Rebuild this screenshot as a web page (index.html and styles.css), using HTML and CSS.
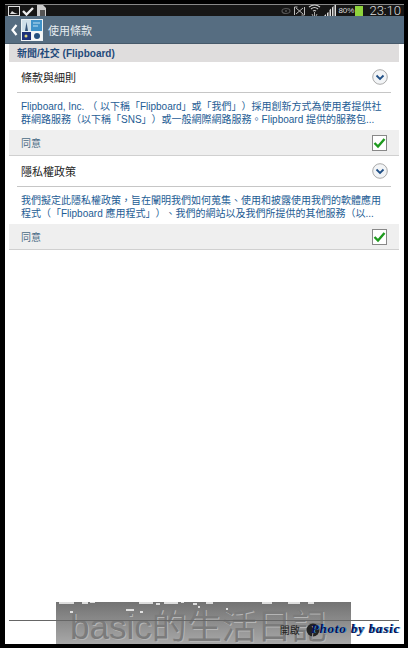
FILE: index.html
```html
<!DOCTYPE html>
<html lang="zh-Hant">
<head>
    <meta charset="UTF-8" />
    <meta name="viewport" content="width=device-width, initial-scale=1.0"/>
    <title>使用條款</title>
    <link rel="stylesheet" href="styles.css">
</head>
<body>

<div class="screen">
    <div class="status">
        <div class="status-left">
            <svg width="12" height="10" viewBox="0 0 12 10"><rect x=".5" y=".5" width="11" height="9" fill="none" stroke="#ddd"/><path d="M2 8l2-3 2 1.500 1 .5 3 1z" fill="#ddd"/></svg>
            <svg width="12" height="10" viewBox="0 0 12 10"><path d="M1 5l3.500 3.500L11 2" fill="none" stroke="#eee" stroke-width="2.400"/></svg>
            <svg class="doc" width="9" height="12" viewBox="0 0 9 12"><path d="M0 0h6l3 3v9H0z" fill="#ccc"/><rect x="3" y="5" width="5" height="6" fill="#555"/></svg>
        </div>
        <div class="status-right">
            <svg width="10" height="8" viewBox="0 0 10 8"><ellipse cx="5" cy="4" rx="4" ry="2.500" fill="none" stroke="#555" stroke-width="1.200"/><circle cx="5" cy="4" r="1" fill="#555"/></svg>
            <svg width="11" height="10" viewBox="0 0 11 10"><path d="M.5 1v8M10.500 1v8M.5 1h3M7.500 9h3M2 2l7 6M9 2L2 8" stroke="#bbb" fill="none"/></svg>
            <svg width="13" height="13" viewBox="0 0 13 13"><path d="M1 3q5.500-4 11 0M3 5q3.500-3 7 0M5 7q1.500-1 3 0" stroke="#ccc" fill="none" stroke-width="1.200"/><path d="M6.500 8v4M4 10l1 2M9 10l-1 2" stroke="#aaa"/></svg>
            <svg class="signal" width="12" height="11" viewBox="0 0 12 11"><path d="M0 11l2-2v2zM3 11V8l1.500-1v4zM5.500 11V5L7 3.500V11zM8 11V2.500L9.500 1V11zM10.500 11V0H12v11z" fill="#ddd"/></svg>
            <span class="battery-text">80%</span>
            <span class="battery"></span>
            <span class="clock">23:10</span>
        </div>
    </div>

    <div class="appbar">
        <svg class="back" width="7" height="12" viewBox="0 0 7 12"><path d="M5.500 1L1.500 6l4 5" fill="none" stroke="#fff" stroke-width="2.200"/></svg>
        <svg class="app-icon" width="22" height="22" viewBox="0 0 22 22">
            <rect width="22" height="22" fill="#eef3f6"/>
            <rect x="1" y="1" width="9" height="11" fill="#cfe0ea"/>
            <path d="M4 12l1.500-9L7 12z" fill="#35557a"/>
            <rect x="10" y="1" width="11" height="11" fill="#3f92c9"/>
            <path d="M12 4h7M12 7h5" stroke="#bfe0f2"/>
            <rect x="1" y="13" width="9" height="8" fill="#1c2f78"/>
            <circle cx="5" cy="17" r="1.500" fill="#d9d27a"/>
            <rect x="11" y="13" width="10" height="8" fill="#f6f6f6"/>
            <circle cx="16" cy="17" r="3" fill="#26507f"/>
        </svg>
        <span class="appbar-title">使用條款</span>
    </div>

    <div class="section-bar">新聞/社交 (Flipboard)</div>

    <div class="term-head">
        <span>條款與細則</span>
        <svg class="chevron" width="16" height="16" viewBox="0 0 16 16"><circle cx="8" cy="8" r="7.300" fill="#f2f4f6" stroke="#aaa"/><path d="M4.500 6.500L8 10l3.500-3.500" fill="none" stroke="#1f4f86" stroke-width="1.800"/></svg>
    </div>
    <p class="term-text">Flipboard, Inc. （ 以下稱「Flipboard」或「我們」）採用創新方式為使用者提供社<br>群網路服務（以下稱「SNS」）或一般網際網路服務。Flipboard 提供的服務包...</p>
    <div class="agree">
        <span>同意</span>
        <svg class="check" width="15" height="16" viewBox="0 0 15 16"><rect x=".5" y=".5" width="14" height="15" fill="#fff" stroke="#888"/><path d="M2.500 8l3.500 3.500 6.500-7.500" fill="none" stroke="#1d9a1d" stroke-width="2.400"/></svg>
    </div>

    <div class="term-head">
        <span>隱私權政策</span>
        <svg class="chevron" width="16" height="16" viewBox="0 0 16 16"><circle cx="8" cy="8" r="7.300" fill="#f2f4f6" stroke="#aaa"/><path d="M4.500 6.500L8 10l3.500-3.500" fill="none" stroke="#1f4f86" stroke-width="1.800"/></svg>
    </div>
    <p class="term-text">我們擬定此隱私權政策，旨在闡明我們如何蒐集、使用和披露使用我們的軟體應用<br>程式（「Flipboard 應用程式」）、我們的網站以及我們所提供的其他服務（以...</p>
    <div class="agree">
        <span>同意</span>
        <svg class="check" width="15" height="16" viewBox="0 0 15 16"><rect x=".5" y=".5" width="14" height="15" fill="#fff" stroke="#888"/><path d="M2.500 8l3.500 3.500 6.500-7.500" fill="none" stroke="#1d9a1d" stroke-width="2.400"/></svg>
    </div>

    <div class="spacer"></div>

    <div class="footer">
        <div class="watermark">basic的生活日記</div>
        <svg class="specks" width="295" height="14" viewBox="0 0 295 14">
            <path d="M3 1h15M26 1h6M34 0h5M83 1h14M100 2h4M108 1h14M125 0h3M137 2h4M150 1h7M206 1h10M232 1h12M252 1h6M14 10h3M70 8h8M84 10h3M142 5h2M170 7h2" stroke="#fff" stroke-width="1.400"/>
        </svg>
        <div class="footer-line"></div>
        <span class="open-label">開啟</span>
        <svg class="knob" width="14" height="18" viewBox="0 0 14 18"><circle cx="7" cy="7" r="6.500" fill="#222"/><path d="M6 3q3 2 1 6M7 9l-1 8" stroke="#999" fill="none"/></svg>
        <span class="photo-by">Photo by basic</span>
    </div>
</div>

</body>
</html>
```

FILE: styles.css
```css
* { box-sizing: border-box; }
html, body { margin: 0; height: 100%; }
body {
    background: #000;
    padding: 4px 4px 4px 5px;
    font-family: "Liberation Sans", "Noto Sans CJK TC", sans-serif;
    text-spacing-trim: space-all;
}
.screen {
    height: 640px;
    background: #fff;
    display: flex;
    flex-direction: column;
    overflow: hidden;
}

.status {
    height: 12px;
    flex: none;
    background: #161616;
    border-top: 1px solid #888;
    display: flex;
    justify-content: space-between;
    align-items: center;
}
.status-left { display: flex; align-items: center; gap: 2px; padding-left: 3px; }
.doc { margin-left: 1px; }
.status-right { display: flex; align-items: center; gap: 3px; padding-right: 3px; }
.battery-text { color: #ddd; font-size: 8px; margin-left: -1px; }
.battery { width: 8px; height: 10px; background: #8fd43c; margin-left: -2px; }
.clock { color: #ddd; font: 300 13px Roboto, sans-serif; margin-left: 3px; }

.appbar {
    height: 28px;
    flex: none;
    background: #566d81;
    border-bottom: 1px solid #46596a;
    display: flex;
    align-items: center;
    padding-left: 6px;
}
.back { margin-right: 3px; }
.app-icon { margin-right: 5px; }
.appbar-title { color: #e6ecf0; font-size: 11px; }

.section-bar {
    flex: none;
    height: 18px;
    margin: 0 5px 0 4px;
    padding-left: 8px;
    background: #dfdddd;
    color: #1f4a7a;
    font-size: 10px;
    font-weight: bold;
    line-height: 19px;
}

.term-head {
    flex: none;
    height: 31px;
    margin: 0 13px 0 12px;
    padding: 0 4px;
    border-bottom: 1px solid #c6c6c6;
    display: flex;
    justify-content: space-between;
    align-items: center;
    font-size: 11px;
    color: #222;
}
.chevron { margin-right: -1px; }
.term-text {
    flex: none;
    margin: 0;
    padding: 7px 0 0 16px;
    height: 37px;
    font-size: 10px;
    line-height: 13px;
    color: #1d5c94;
    white-space: nowrap;
}
.agree {
    flex: none;
    height: 26px;
    margin: 0 5px 0 4px;
    padding: 0 12px 0 12px;
    background: #efefef;
    border-bottom: 1px solid #d0d0d0;
    display: flex;
    justify-content: space-between;
    align-items: center;
    font-size: 10px;
    color: #4a6b85;
}

.spacer { flex: 1; }

.footer {
    position: relative;
    flex: none;
    height: 42px;
    display: flex;
    justify-content: flex-end;
    align-items: center;
    overflow: hidden;
}
.watermark {
    position: absolute;
    left: 51px;
    top: 0;
    width: 295px;
    height: 42px;
    background: linear-gradient(#737373, #a8a8a8);
    color: #7b7b7b;
    font-size: 35px;
    line-height: 35px;
    padding: 7px 0 0 14px;
    text-shadow: 1px 1px 0 #b5b5b5;
    white-space: nowrap;
    overflow: hidden;
}
.specks { position: absolute; left: 51px; top: 0; }
.footer-line {
    position: absolute;
    left: 4px;
    right: 5px;
    top: 18px;
    height: 1px;
    background: #666;
}
.open-label { position: relative; font-size: 10px; color: #222; margin: 12px 6px 0 0; }
.knob { position: relative; margin: 18px 0 0; }
.photo-by {
    position: relative;
    font: italic bold 13px "Liberation Serif", serif;
    letter-spacing: .8px;
    color: #061050;
    text-shadow: 1px 0 0 #3f8fd0;
    margin: 12px 4px 0 -9px;
    white-space: nowrap;
}
```
